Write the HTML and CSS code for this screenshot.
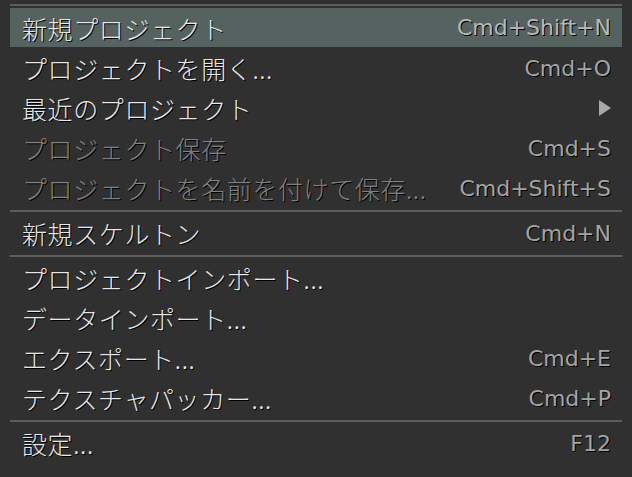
FILE: index.html
```html
<!DOCTYPE html>
<html lang="ja">
<head>
<meta charset="utf-8">
<link rel="stylesheet" href="styles.css">
</head>
<body>
<div class="menu">
  <div class="topline"></div>
  <div class="item active"><span class="label">新規プロジェクト</span><span class="key">Cmd+Shift+N</span></div>
  <div class="item"><span class="label">プロジェクトを開く...</span><span class="key">Cmd+O</span></div>
  <div class="item"><span class="label">最近のプロジェクト</span><span class="arrow"></span></div>
  <div class="item disabled"><span class="label">プロジェクト保存</span><span class="key">Cmd+S</span></div>
  <div class="item disabled"><span class="label">プロジェクトを名前を付けて保存...</span><span class="key">Cmd+Shift+S</span></div>
  <div class="sep"></div>
  <div class="item"><span class="label">新規スケルトン</span><span class="key">Cmd+N</span></div>
  <div class="sep"></div>
  <div class="item"><span class="label">プロジェクトインポート...</span></div>
  <div class="item"><span class="label">データインポート...</span></div>
  <div class="item"><span class="label">エクスポート...</span><span class="key">Cmd+E</span></div>
  <div class="item"><span class="label">テクスチャパッカー...</span><span class="key">Cmd+P</span></div>
  <div class="sep"></div>
  <div class="item"><span class="label">設定...</span><span class="key">F12</span></div>
</div>
</body>
</html>
```
FILE: styles.css
```css
html, body {
  margin: 0;
  padding: 0;
  background: #303030;
  width: 632px;
  height: 477px;
  overflow: hidden;
}
.menu {
  margin-left: 10px;
  width: 612px;
  padding-top: 4px;
  display: flex;
  flex-direction: column;
}
.topline {
  height: 2px;
  background: #5c5c5c;
  margin-bottom: 2px;
}
.item {
  height: 40px;
  display: flex;
  align-items: center;
  justify-content: space-between;
  padding: 0 11px 0 12px;
  text-shadow: 1px 1px 0 #000;
}
.item.active {
  background: #55625f;
  height: 39px;
  margin-bottom: 1px;
}
.label {
  font-family: "Noto Sans CJK JP", "DejaVu Sans", sans-serif;
  font-size: 25px;
  font-weight: 300;
  letter-spacing: 0.6px;
  color: #e8e8e8;
  white-space: nowrap;
}
.disabled .label {
  color: #808080;
}
.key {
  font-family: "DejaVu Sans", sans-serif;
  font-size: 22px;
  color: #a4a4a4;
  white-space: nowrap;
}
.active .key {
  color: #b4bab8;
}
.arrow {
  width: 0;
  height: 0;
  border-top: 8px solid transparent;
  border-bottom: 8px solid transparent;
  border-left: 12px solid #a8a8a8;
}
.sep {
  height: 2px;
  background: #5c5c5c;
  margin: 2px 0 1px;
}
```
